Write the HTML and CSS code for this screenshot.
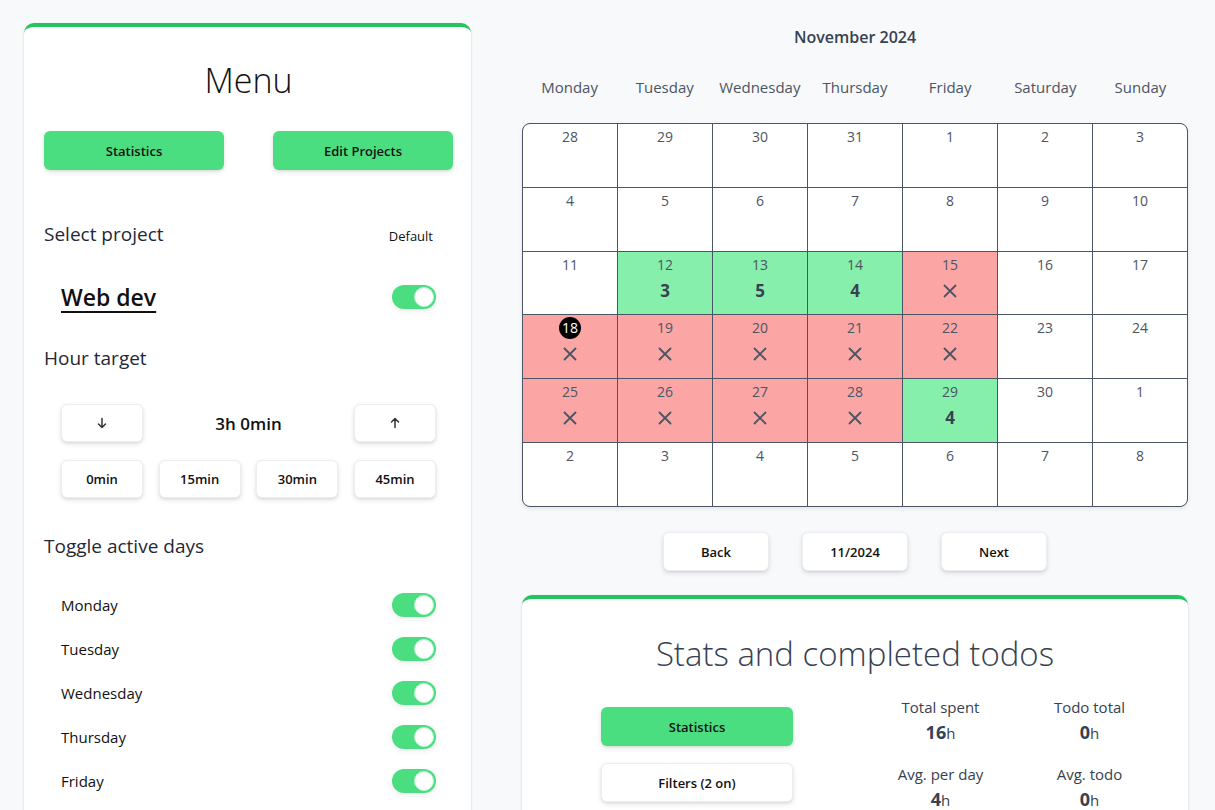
FILE: index.html
```html
<!DOCTYPE html>
<html>
<head>
<meta charset="utf-8">
<link rel="stylesheet" href="styles.css">
</head>
<body>
<div class="page">
  <aside class="menu card">
    <h1 class="card-title">Menu</h1>
    <div class="menu-actions">
      <button class="btn btn-green btn-menu">Statistics</button>
      <button class="btn btn-green btn-menu">Edit Projects</button>
    </div>

    <div class="section-head">
      <h2 class="section-title">Select project</h2>
      <span class="default-label">Default</span>
    </div>
    <div class="project-row">
      <span class="project-name">Web dev</span>
      <span class="toggle on"><span class="knob"></span></span>
    </div>

    <h2 class="section-title spaced">Hour target</h2>
    <div class="target-row">
      <button class="btn btn-white btn-sm"><svg class="arrow" viewBox="0 0 12 12"><path d="M6 1.5V10.5M2.5 7L6 10.5L9.5 7"/></svg></button>
      <span class="target-value">3h 0min</span>
      <button class="btn btn-white btn-sm"><svg class="arrow" viewBox="0 0 12 12"><path d="M6 10.5V1.5M2.5 5L6 1.5L9.5 5"/></svg></button>
    </div>
    <div class="minutes-row">
      <button class="btn btn-white btn-sm">0min</button>
      <button class="btn btn-white btn-sm">15min</button>
      <button class="btn btn-white btn-sm">30min</button>
      <button class="btn btn-white btn-sm">45min</button>
    </div>

    <h2 class="section-title spaced-lg">Toggle active days</h2>
    <ul class="days">
      <li class="day-row"><span>Monday</span><span class="toggle on"><span class="knob"></span></span></li>
      <li class="day-row"><span>Tuesday</span><span class="toggle on"><span class="knob"></span></span></li>
      <li class="day-row"><span>Wednesday</span><span class="toggle on"><span class="knob"></span></span></li>
      <li class="day-row"><span>Thursday</span><span class="toggle on"><span class="knob"></span></span></li>
      <li class="day-row"><span>Friday</span><span class="toggle on"><span class="knob"></span></span></li>
    </ul>
  </aside>

  <main class="main">
    <div class="month-title">November 2024</div>
    <div class="weekdays">
      <span>Monday</span><span>Tuesday</span><span>Wednesday</span><span>Thursday</span><span>Friday</span><span>Saturday</span><span>Sunday</span>
    </div>
    <div class="calendar">
      <div class="cell"><span class="num">28</span></div>
      <div class="cell"><span class="num">29</span></div>
      <div class="cell"><span class="num">30</span></div>
      <div class="cell"><span class="num">31</span></div>
      <div class="cell"><span class="num">1</span></div>
      <div class="cell"><span class="num">2</span></div>
      <div class="cell"><span class="num">3</span></div>

      <div class="cell"><span class="num">4</span></div>
      <div class="cell"><span class="num">5</span></div>
      <div class="cell"><span class="num">6</span></div>
      <div class="cell"><span class="num">7</span></div>
      <div class="cell"><span class="num">8</span></div>
      <div class="cell"><span class="num">9</span></div>
      <div class="cell"><span class="num">10</span></div>

      <div class="cell"><span class="num">11</span></div>
      <div class="cell done"><span class="num">12</span><span class="val">3</span></div>
      <div class="cell done"><span class="num">13</span><span class="val">5</span></div>
      <div class="cell done"><span class="num">14</span><span class="val">4</span></div>
      <div class="cell miss"><span class="num">15</span><svg class="x" viewBox="0 0 16 16"><path d="M2 2L14 14M14 2L2 14"/></svg></div>
      <div class="cell"><span class="num">16</span></div>
      <div class="cell"><span class="num">17</span></div>

      <div class="cell miss"><span class="num today">18</span><svg class="x" viewBox="0 0 16 16"><path d="M2 2L14 14M14 2L2 14"/></svg></div>
      <div class="cell miss"><span class="num">19</span><svg class="x" viewBox="0 0 16 16"><path d="M2 2L14 14M14 2L2 14"/></svg></div>
      <div class="cell miss"><span class="num">20</span><svg class="x" viewBox="0 0 16 16"><path d="M2 2L14 14M14 2L2 14"/></svg></div>
      <div class="cell miss"><span class="num">21</span><svg class="x" viewBox="0 0 16 16"><path d="M2 2L14 14M14 2L2 14"/></svg></div>
      <div class="cell miss"><span class="num">22</span><svg class="x" viewBox="0 0 16 16"><path d="M2 2L14 14M14 2L2 14"/></svg></div>
      <div class="cell"><span class="num">23</span></div>
      <div class="cell"><span class="num">24</span></div>

      <div class="cell miss"><span class="num">25</span><svg class="x" viewBox="0 0 16 16"><path d="M2 2L14 14M14 2L2 14"/></svg></div>
      <div class="cell miss"><span class="num">26</span><svg class="x" viewBox="0 0 16 16"><path d="M2 2L14 14M14 2L2 14"/></svg></div>
      <div class="cell miss"><span class="num">27</span><svg class="x" viewBox="0 0 16 16"><path d="M2 2L14 14M14 2L2 14"/></svg></div>
      <div class="cell miss"><span class="num">28</span><svg class="x" viewBox="0 0 16 16"><path d="M2 2L14 14M14 2L2 14"/></svg></div>
      <div class="cell done"><span class="num">29</span><span class="val">4</span></div>
      <div class="cell"><span class="num">30</span></div>
      <div class="cell"><span class="num">1</span></div>

      <div class="cell"><span class="num">2</span></div>
      <div class="cell"><span class="num">3</span></div>
      <div class="cell"><span class="num">4</span></div>
      <div class="cell"><span class="num">5</span></div>
      <div class="cell"><span class="num">6</span></div>
      <div class="cell"><span class="num">7</span></div>
      <div class="cell"><span class="num">8</span></div>
    </div>

    <div class="nav">
      <button class="btn btn-white btn-nav">Back</button>
      <button class="btn btn-white btn-nav">11/2024</button>
      <button class="btn btn-white btn-nav">Next</button>
    </div>

    <section class="stats card">
      <h1 class="card-title stats-title">Stats and completed todos</h1>
      <div class="stats-body">
        <div class="stats-actions">
          <button class="btn btn-green btn-wide">Statistics</button>
          <button class="btn btn-white btn-wide">Filters (2 on)</button>
        </div>
        <div class="stats-grid">
          <div class="stat"><span class="stat-label">Total spent</span><span class="stat-value"><b>16</b>h</span></div>
          <div class="stat"><span class="stat-label">Todo total</span><span class="stat-value"><b>0</b>h</span></div>
          <div class="stat"><span class="stat-label">Avg. per day</span><span class="stat-value"><b>4</b>h</span></div>
          <div class="stat"><span class="stat-label">Avg. todo</span><span class="stat-value"><b>0</b>h</span></div>
        </div>
      </div>
    </section>
  </main>
</div>
</body>
</html>
```

FILE: styles.css
```css
* { box-sizing: border-box; }

html, body {
  margin: 0;
  padding: 0;
  background: #f8f9fb;
  font-family: "Open Sans", "Noto Sans", sans-serif;
  color: #111827;
  overflow: hidden;
}

h1, h2, ul { margin: 0; padding: 0; }
ul { list-style: none; }

.page {
  display: flex;
  align-items: flex-start;
  gap: 51px;
  padding: 23px 27px 0 24px;
  height: 810px;
}

.card {
  background: #fff;
  border-top: 4px solid #22c55e;
  border-radius: 10px;
  box-shadow: 0 1px 3px rgba(0,0,0,0.12), 0 1px 2px rgba(0,0,0,0.06);
}

/* ---------- Menu ---------- */
.menu {
  width: 447px;
  flex: none;
  padding: 29px 18px 40px 20px;
}

.card-title {
  font-weight: 300;
  font-size: 34px;
  line-height: 48px;
  text-align: center;
  color: #111;
}

.menu-actions {
  display: flex;
  justify-content: space-between;
  margin-top: 27px;
}

.btn {
  font-family: inherit;
  border: none;
  border-radius: 6px;
  font-weight: 600;
  font-size: 13px;
  color: #111;
  cursor: pointer;
  box-shadow: 0 2px 5px rgba(0,0,0,0.12), 0 1px 2px rgba(0,0,0,0.06);
}

.btn-green { background: #4ade80; }
.btn-white { background: #fff; border: 1px solid #eceef1; }

.btn-menu { width: 180px; height: 39px; }

.section-head {
  display: flex;
  justify-content: space-between;
  align-items: center;
  margin-top: 50px;
  padding-right: 20px;
}

.section-title {
  font-weight: 400;
  font-size: 19px;
  line-height: 28px;
  color: #1f2937;
}

.default-label {
  font-size: 13px;
  color: #111;
  padding-top: 4px;
}

.project-row {
  display: flex;
  justify-content: space-between;
  align-items: center;
  margin-top: 33px;
  padding: 0 17px;
  height: 32px;
}

.project-name {
  font-size: 23px;
  font-weight: 600;
  color: #111;
  text-decoration: underline;
  text-decoration-thickness: 2px;
  text-underline-offset: 5px;
}

.toggle {
  width: 44px;
  height: 24px;
  border-radius: 12px;
  background: #4ade80;
  display: flex;
  align-items: center;
  justify-content: flex-end;
  padding: 2px;
  box-shadow: 0 2px 6px rgba(0,0,0,0.08);
}

.knob {
  width: 20px;
  height: 20px;
  border-radius: 50%;
  background: #fff;
  border: 1px solid #bbf7d0;
}

.spaced { margin-top: 31px; }
.spaced-lg { margin-top: 34px; }

.target-row {
  display: grid;
  grid-template-columns: 82px 1fr 82px;
  align-items: center;
  margin-top: 32px;
  padding: 0 17px;
}

.btn-sm {
  height: 38px;
  width: 82px;
  display: flex;
  align-items: center;
  justify-content: center;
}

.arrow {
  width: 12px;
  height: 12px;
  stroke: #333;
  stroke-width: 1.5;
  fill: none;
  stroke-linecap: round;
  stroke-linejoin: round;
}

.target-value {
  text-align: center;
  font-size: 17px;
  font-weight: 600;
  color: #111;
}

.minutes-row {
  display: flex;
  justify-content: space-between;
  margin-top: 18px;
  padding: 0 17px;
}

.days {
  margin-top: 23px;
  padding: 0 17px;
}

.day-row {
  display: flex;
  justify-content: space-between;
  align-items: center;
  height: 44px;
  font-size: 15px;
  color: #111;
}

/* ---------- Calendar ---------- */
.main {
  flex: 1;
  min-width: 0;
}

.month-title {
  text-align: center;
  font-weight: 600;
  font-size: 16px;
  line-height: 28px;
  color: #374151;
}

.weekdays {
  display: grid;
  grid-template-columns: repeat(7, 1fr);
  padding: 24px 0;
  line-height: 24px;
  font-size: 15px;
  color: #4b5563;
  text-align: center;
}

.calendar {
  display: grid;
  grid-template-columns: repeat(7, 1fr);
  grid-template-rows: repeat(6, 1fr);
  gap: 1px;
  height: 384px;
  background: #4b5563;
  border: 1px solid #4b5563;
  border-radius: 8px;
  overflow: hidden;
  box-shadow: 0 2px 4px rgba(0,0,0,0.08);
}

.cell {
  background: #fff;
  display: flex;
  flex-direction: column;
  align-items: center;
  padding-top: 3px;
  color: #4b5563;
}

.cell.done { background: #86efac; }
.cell.miss { background: #fca5a5; }

.num {
  font-size: 14px;
  line-height: 20px;
}

.num.today {
  background: #000;
  color: #fff;
  width: 22px;
  height: 22px;
  line-height: 22px;
  border-radius: 50%;
  text-align: center;
  margin-top: -1px;
  margin-bottom: -1px;
  font-size: 14px;
}

.val {
  margin-top: 5px;
  font-size: 17px;
  font-weight: 700;
  line-height: 22px;
  color: #374151;
}

.x {
  width: 16px;
  height: 16px;
  margin-top: 8px;
  stroke: #4b5563;
  stroke-width: 1.8;
  fill: none;
}

.nav {
  display: flex;
  justify-content: center;
  gap: 33px;
  margin-top: 25px;
}

.btn-nav { width: 106px; height: 39px; }

/* ---------- Stats ---------- */
.stats {
  margin-top: 24px;
  padding: 31px 24px 30px 79px;
  margin-bottom: 0;
}

.stats-title {
  color: #374151;
  font-size: 33px;
  margin-left: -55px;
}

.stats-body {
  display: flex;
  gap: 73px;
  margin-top: 19px;
}

.stats-actions {
  display: flex;
  flex-direction: column;
  gap: 17px;
  padding-top: 10px;
}

.btn-wide { width: 192px; height: 39px; }

.stats-grid {
  display: grid;
  grid-template-columns: 1fr 1fr;
  row-gap: 16px;
  flex: 1;
}

.stat {
  display: flex;
  flex-direction: column;
  align-items: center;
  color: #374151;
}

.stat-label {
  font-size: 15px;
  line-height: 20px;
}

.stat-value {
  font-size: 15px;
  line-height: 30px;
}

.stat-value b {
  font-size: 18px;
  font-weight: 700;
}
```
